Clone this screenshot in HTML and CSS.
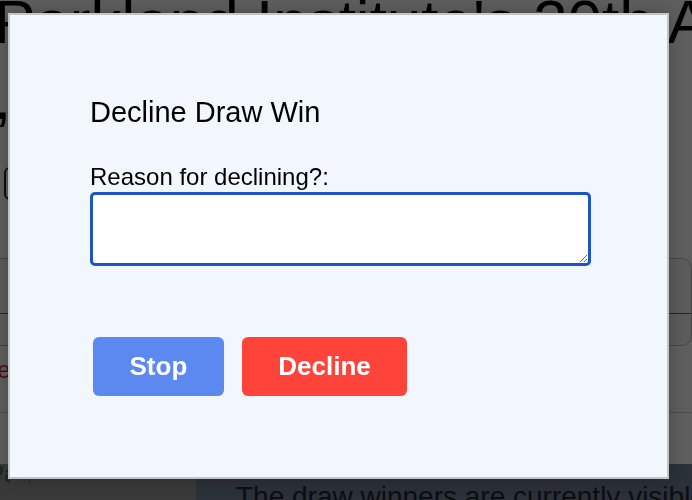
FILE: index.html
```html
<!doctype html>
<html>
<head>
    <meta charset="UTF-8">
    <meta name="viewport" content="width=device-width, initial-scale=1.0">
    <title>Decline Draw Win</title>
    <link rel="stylesheet" href="styles.css">
</head>
<body>
    <div class="page">
        <h1 class="title">
            <span class="title-line">Parkland Institute's 20th Anniversary</span>
            <span class="title-line">, Edmonton</span>
        </h1>
        <div class="meta">
            <span class="cal-icon"></span>
            <span class="meta-text">October 2016</span>
        </div>
        <div class="card">
            <div class="card-rule"></div>
        </div>
        <p class="status">Declined</p>
        <div class="rule"></div>
        <div class="bottom">
            <div class="winners-table">
                <div class="cell">Paid</div>
                <div class="cell"></div>
            </div>
            <div class="band">The draw winners are currently visible</div>
        </div>
    </div>

    <div class="overlay"></div>

    <!-- decline dialog -->
    <div class="dialog">
        <h2 class="dialog-title">Decline Draw Win</h2>
        <label class="reason-label" for="reason">Reason for declining?:</label>
        <textarea id="reason" class="reason-input"></textarea>
        <div class="actions">
            <button class="btn btn-stop">Stop</button>
            <button class="btn btn-decline">Decline</button>
        </div>
    </div>
</body>
</html>
```

FILE: styles.css
```css
body {
    margin: 0;
    height: 500px;
    overflow: hidden;
    background: #fff;
    font-family: "Liberation Sans", Arial, sans-serif;
    color: #000;
}
.page {
    width: 692px;
    overflow: hidden;
}
.title {
    margin: -16px 0 0 -6px;
    font-size: 62px;
    font-weight: normal;
    line-height: 76px;
    white-space: nowrap;
}
.title-line {
    display: block;
}
.meta {
    display: flex;
    align-items: center;
    gap: 12px;
    margin-top: 31px;
    padding-left: 4px;
    height: 33px;
}
.cal-icon {
    width: 22px;
    height: 29px;
    border: 2px solid #222;
    border-radius: 6px;
}
.meta-text {
    font-size: 20px;
}
.card {
    margin: 58px 0 0 -10px;
    height: 86px;
    border: 1px solid #bbb;
    border-radius: 10px;
    background: #f7f7f7;
}
.card-rule {
    margin-top: 54px;
    height: 1px;
    background: #2e8b57;
}
.status {
    margin: 12px 0 0 -20px;
    font-size: 24px;
    line-height: 24px;
    color: #e02020;
}
.rule {
    margin-top: 30px;
    height: 1px;
    background: #ccc;
}
.bottom {
    display: grid;
    grid-template-columns: 196px 1fr;
    margin-top: 51px;
    height: 60px;
}
.winners-table {
    display: grid;
    grid-template-columns: 10px 20px;
    align-content: start;
    background: #9a9a9a;
    border-bottom: 1px solid #2f8f5f;
}
.winners-table .cell {
    height: 20px;
    border-right: 1px solid #2f8f5f;
    color: #1e7a46;
    font-size: 24px;
    line-height: 20px;
    text-indent: -12px;
    overflow: hidden;
}
.band {
    padding: 17px 0 0 40px;
    background: #74849a;
    color: #1f252c;
    font-size: 28px;
    white-space: nowrap;
    overflow: hidden;
}
.overlay {
    position: fixed;
    inset: 0;
    background: rgba(0, 0, 0, 0.63);
}
.dialog {
    position: fixed;
    top: 13px;
    left: 8px;
    box-sizing: border-box;
    width: 661px;
    height: 466px;
    padding: 80px 76px 0 80px;
    background: #f2f7fe;
    border: 2px solid #c4c4c4;
    box-shadow: 0 0 18px rgba(0, 0, 0, 0.25);
}
.dialog-title {
    margin: 0;
    font-size: 29px;
    font-weight: normal;
    line-height: 34px;
}
.reason-label {
    display: block;
    margin-top: 34px;
    font-size: 24px;
    line-height: 28px;
}
.reason-input {
    display: block;
    box-sizing: border-box;
    width: 501px;
    height: 74px;
    margin-top: 1px;
    border: 3px solid #1b56c3;
    border-radius: 5px;
    background: #fff;
    outline: none;
}
.actions {
    display: flex;
    gap: 18px;
    margin: 71px 0 0 3px;
}
.btn {
    height: 59px;
    padding: 0 36.5px;
    border: none;
    border-radius: 6px;
    color: #fff;
    font-family: "Liberation Sans", Arial, sans-serif;
    font-size: 26px;
    font-weight: bold;
    cursor: pointer;
}
.btn-stop {
    background-color: #5b89ef;
}
.btn-decline {
    background-color: #fd433a;
}
```
